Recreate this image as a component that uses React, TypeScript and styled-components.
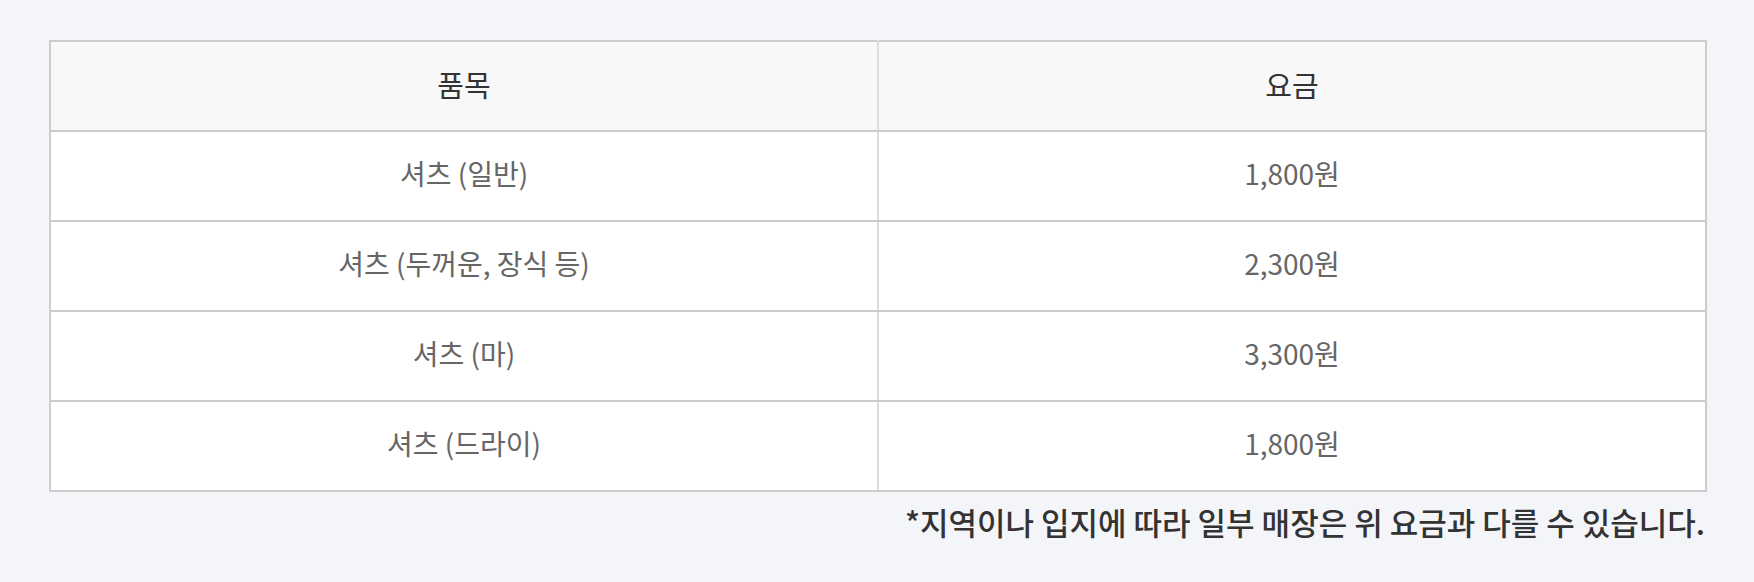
import React from 'react';
import styled, { createGlobalStyle } from 'styled-components';

const GlobalStyle = createGlobalStyle`
  html, body {
    margin: 0;
    padding: 0;
    background: #f4f5f9;
  }
  body {
    font-family: 'Noto Sans CJK KR', 'Noto Sans', sans-serif;
  }
`;

const Page = styled.div`
  padding: 40px 47px 0 49px;
`;

const Table = styled.table`
  width: 100%;
  border-collapse: collapse;
  table-layout: fixed;
  border: 2px solid #cccccc;
  background: #ffffff;
`;

const HeadCell = styled.th`
  box-sizing: border-box;
  height: 90px;
  padding: 0 0 4px;
  background: #f8f8f8;
  color: #333333;
  font-size: 29px;
  font-weight: 400;
  line-height: 1.2;
  text-align: center;
  border-bottom: 2px solid #cccccc;

  & + & {
    border-left: 2px solid #dddddd;
  }
`;

const Cell = styled.td`
  box-sizing: border-box;
  height: 90px;
  padding: 0 0 4px;
  color: #666666;
  font-size: 28px;
  font-weight: 400;
  line-height: 1.2;
  text-align: center;
  border-bottom: 2px solid #cccccc;

  & + & {
    border-left: 2px solid #dddddd;
  }
`;

const Note = styled.p`
  margin: 8px 2px 0 0;
  text-align: right;
  font-size: 31px;
  font-weight: 500;
  color: #333333;
  line-height: 1.4;
`;

const prices = [
  { item: '셔츠 (일반)', price: '1,800원' },
  { item: '셔츠 (두꺼운, 장식 등)', price: '2,300원' },
  { item: '셔츠 (마)', price: '3,300원' },
  { item: '셔츠 (드라이)', price: '1,800원' },
];

export default function App() {
  return (
    <>
      <GlobalStyle />
      <Page>
        <Table>
          <thead>
            <tr>
              <HeadCell>품목</HeadCell>
              <HeadCell>요금</HeadCell>
            </tr>
          </thead>
          <tbody>
            {prices.map(row => (
              <tr key={row.item}>
                <Cell>{row.item}</Cell>
                <Cell>{row.price}</Cell>
              </tr>
            ))}
          </tbody>
        </Table>
        <Note>*지역이나 입지에 따라 일부 매장은 위 요금과 다를 수 있습니다.</Note>
      </Page>
    </>
  );
}
